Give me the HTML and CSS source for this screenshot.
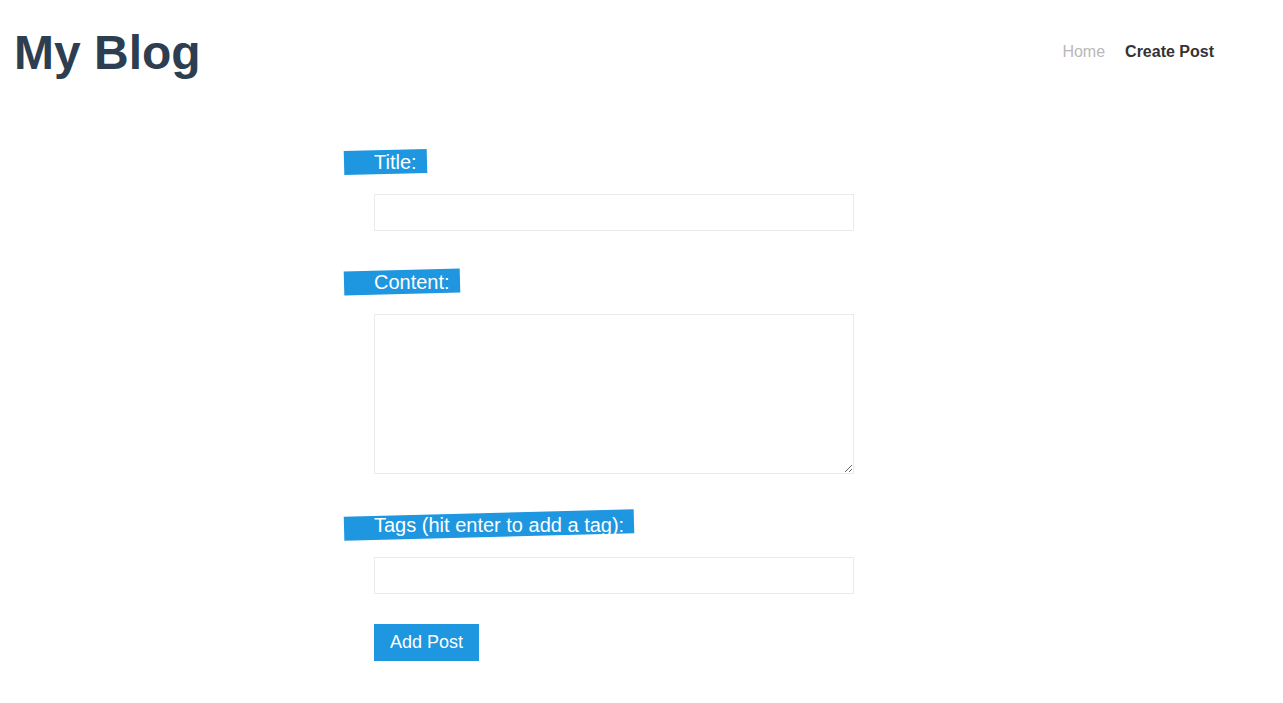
FILE: index.html
```html
<!DOCTYPE html>
<html lang="en">
<head>
<meta charset="utf-8">
<title>My Blog</title>
<link rel="stylesheet" href="styles.css">
</head>
<body>
<header class="site-header">
  <h1 class="brand">My Blog</h1>
  <nav class="nav">
    <a class="nav-link" href="#">Home</a>
    <a class="nav-link nav-link-active" href="#">Create Post</a>
  </nav>
</header>
<main class="main">
  <form class="post-form">
    <div class="field">
      <label class="field-label" for="title">Title:</label>
      <input class="field-input" id="title" type="text">
    </div>
    <div class="field">
      <label class="field-label" for="content">Content:</label>
      <textarea class="field-input field-textarea" id="content"></textarea>
    </div>
    <div class="field">
      <label class="field-label" for="tags">Tags (hit enter to add a tag):</label>
      <input class="field-input" id="tags" type="text">
    </div>
    <button class="submit-btn" type="button">Add Post</button>
  </form>
</main>
</body>
</html>
```

FILE: styles.css
```css
* { box-sizing: border-box; }

body {
  margin: 0;
  font-family: "Liberation Sans", Arial, sans-serif;
  background: #fff;
  color: #333;
}

.site-header {
  display: flex;
  align-items: center;
  justify-content: space-between;
  padding: 25px 69px 0 14px;
}

.brand {
  margin: 0;
  font-size: 48px;
  line-height: 55px;
  font-weight: bold;
  color: #2c3e50;
}

.nav {
  display: flex;
  gap: 20px;
  padding-bottom: 2px;
}

.nav-link {
  font-size: 16px;
  color: #b8b8b8;
  text-decoration: none;
}

.nav-link-active {
  color: #333;
  font-weight: bold;
}

.main {
  padding: 70px 0 0 374px;
}

.post-form {
  width: 480px;
}

.field {
  margin-bottom: 39px;
}

.field:last-of-type {
  margin-bottom: 30px;
}

.field-label {
  position: relative;
  display: inline-block;
  margin-left: -30px;
  padding: 0 10px 0 30px;
  font-size: 20px;
  line-height: 24px;
  color: #fff;
  z-index: 0;
}

.field-label::before {
  content: "";
  position: absolute;
  inset: 0;
  background: #1e96e0;
  transform: rotate(-1.5deg);
  z-index: -1;
}

.field-input {
  display: block;
  width: 480px;
  height: 37px;
  margin-top: 20px;
  border: 1px solid #ebebeb;
  background: #fff;
  font-family: inherit;
  font-size: 16px;
  padding: 6px 10px;
  outline: none;
}

.field-textarea {
  height: 160px;
  resize: both;
}

.submit-btn {
  display: block;
  height: 37px;
  padding: 0 16px;
  border: none;
  background: #1e96e0;
  color: #fff;
  font-family: inherit;
  font-size: 18px;
  cursor: pointer;
}
```
